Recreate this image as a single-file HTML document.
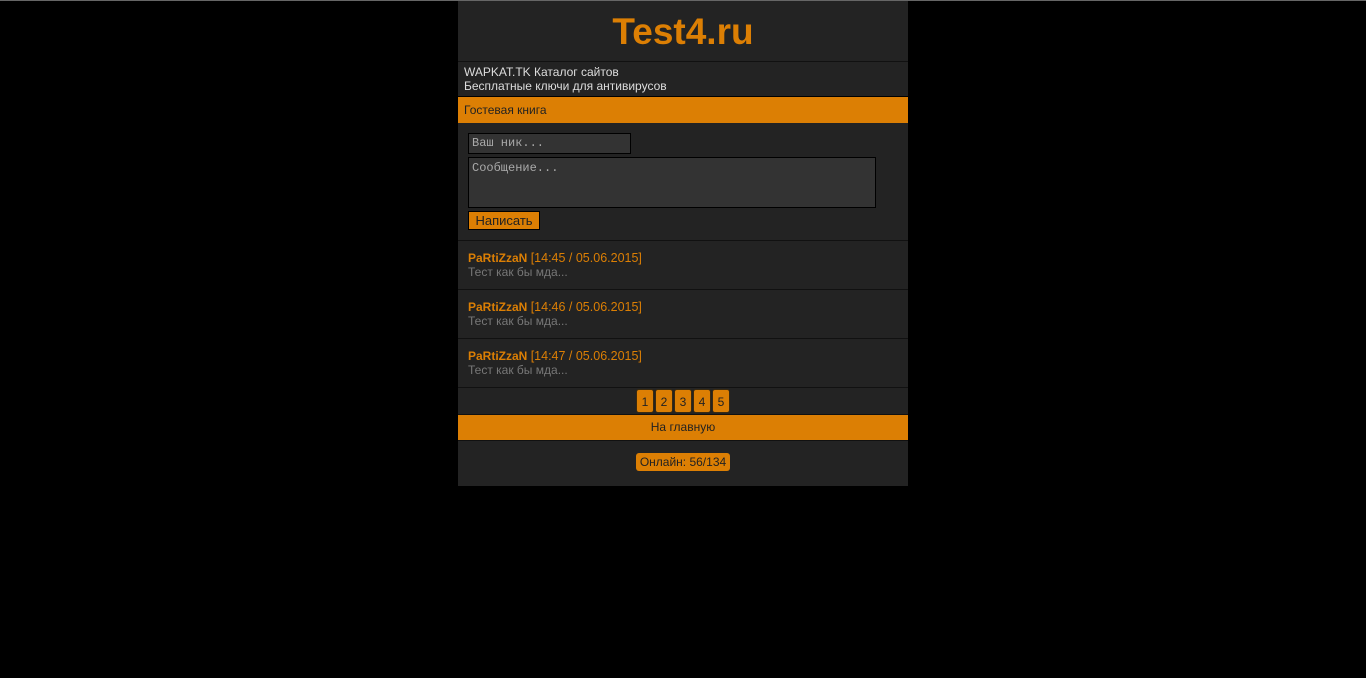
<!DOCTYPE html>
<html><head><meta charset="utf-8"><style>
*{margin:0;padding:0;box-sizing:border-box}
body{background:#000;width:1366px;height:678px;overflow:hidden;font-family:"Liberation Sans",Arial,sans-serif;font-size:12px;position:relative;border-top:1px solid #666}
#w{position:absolute;left:458px;top:0;width:450px;height:485px;background:#232323}
.a{position:absolute;left:0;width:450px}
.ln{position:absolute;left:0;width:450px;height:1px;background:#111}
.or{background:#dc7f04;color:#222}
.in{position:absolute;background:#333;border:1px solid #000;color:#aaa;font-family:"Liberation Mono",monospace;font-size:12px;padding:3px}
.post b{color:#dc7f04}
.post span{color:#dc7f04;font-size:12.5px}
.post div{color:#777}
.pg{display:inline-block;width:18px;height:24px;line-height:24px;background:#dc7f04;border:1px solid #3a2a10;border-radius:3px;color:#222;text-align:center;margin:0 0.5px;font-size:12px}
</style></head><body>
<div id="w">
<div class="a" style="top:10px;text-align:center;font-size:37px;font-weight:bold;color:#dc7f04;line-height:42px">Test4.ru</div>
<div class="ln" style="top:60px"></div>
<div class="a" style="top:64px;padding-left:6px;color:#ddd;line-height:14px">WAPKAT.TK Каталог сайтов<br>Бесплатные ключи для антивирусов</div>
<div class="ln" style="top:95px;background:#000"></div>
<div class="a or" style="top:96px;height:26px;line-height:26px;padding-left:6px">Гостевая книга</div>
<div class="in" style="left:10px;top:132px;width:163px;height:21px;padding:2px 3px">Ваш ник...</div>
<div class="in" style="left:10px;top:156px;width:408px;height:51px">Сообщение...</div>
<div style="position:absolute;left:10px;top:210px;width:72px;height:19px;background:#dc7f04;border:1px solid #000;color:#222;font-size:13px;text-align:center;line-height:17px">Написать</div>
<div class="ln" style="top:239px"></div>
<div class="a post" style="top:250px;padding-left:10px;line-height:14px"><b>PaRtiZzaN</b> <span>[14:45 / 05.06.2015]</span><div>Тест как бы мда...</div></div>
<div class="ln" style="top:288px"></div>
<div class="a post" style="top:299px;padding-left:10px;line-height:14px"><b>PaRtiZzaN</b> <span>[14:46 / 05.06.2015]</span><div>Тест как бы мда...</div></div>
<div class="ln" style="top:337px"></div>
<div class="a post" style="top:348px;padding-left:10px;line-height:14px"><b>PaRtiZzaN</b> <span>[14:47 / 05.06.2015]</span><div>Тест как бы мда...</div></div>
<div class="ln" style="top:386px"></div>
<div class="a" style="top:388px;text-align:center;font-size:0"><span class="pg">1</span><span class="pg">2</span><span class="pg">3</span><span class="pg">4</span><span class="pg">5</span></div>
<div class="ln" style="top:413px"></div>
<div class="a or" style="top:414px;height:25px;line-height:25px;text-align:center">На главную</div>
<div class="ln" style="top:439px"></div>
<div class="a" style="top:452px;text-align:center"><span style="display:inline-block;background:#dc7f04;color:#222;border-radius:3px;padding:0 4px;height:18px;line-height:18px">Онлайн: 56/134</span></div>
</div>
</body></html>
